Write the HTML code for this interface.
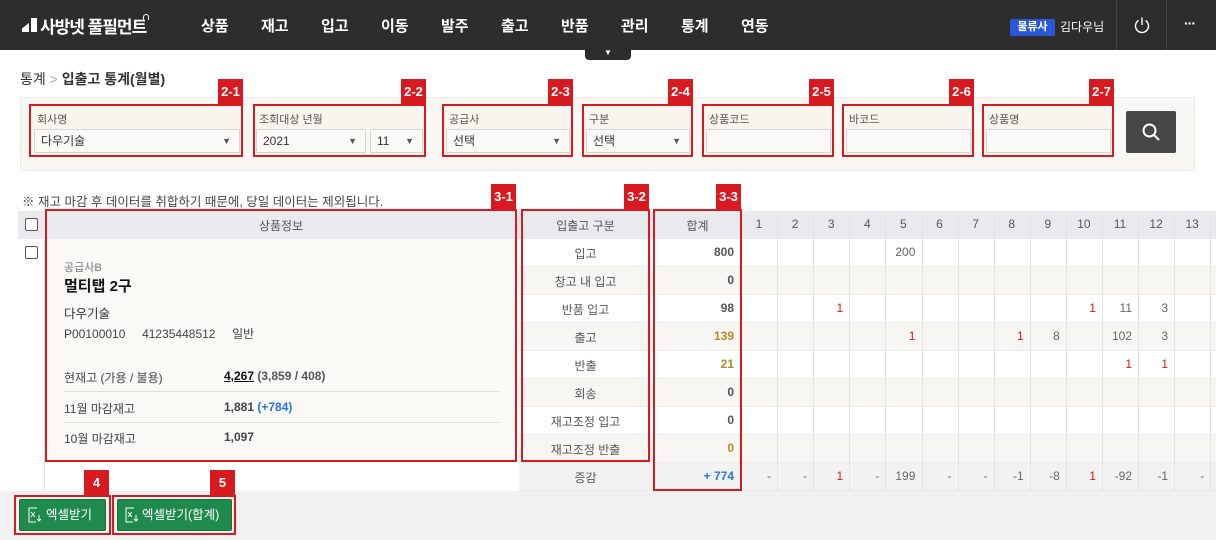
<!DOCTYPE html>
<html><head><meta charset="utf-8"><style>
*{box-sizing:border-box;margin:0;padding:0}
body{width:1216px;height:540px;overflow:hidden;background:#fff;font-family:"Liberation Sans","Noto Sans CJK KR",sans-serif;color:#333;position:relative}
.a{position:absolute}
.hdr{left:0;top:0;width:1216px;height:50px;background:#2d2d2d}
.nav{top:15px;color:#fff;font-size:15px;font-weight:bold}
.tag{background:#d71920;color:#fff;font-size:13px;font-weight:bold;width:25px;height:25px;text-align:center;line-height:26px}
.rb{border:2px solid #d71920}
.lbl{font-size:11px;color:#555}
.inp{height:24px;border:1px solid #d6d6d6;background:#fbfaf8;font-size:12px;color:#333;padding-left:6px;line-height:22px}
.inp i{position:absolute;right:8px;font-style:normal;font-size:9px;color:#555;top:0}
.cell{font-size:12px;text-align:center;color:#555}
.vl{width:1px;background:#e3e3e3}
</style></head><body>
<div class="a hdr"></div>
<div class="a" style="left:22px;top:18px;width:15px;height:14px">
<div class="a" style="left:0;top:5px;width:7px;height:9px;background:#fff;clip-path:polygon(100% 0,100% 100%,0 100%,0 60%)"></div>
<div class="a" style="left:9px;top:0;width:6px;height:14px;background:#fff"></div></div>
<div class="a" style="left:40px;top:13px;color:#fff;font-size:17px;font-weight:bold;letter-spacing:-1px">사방넷 풀필먼트</div>
<div class="a" style="left:143px;top:14px;width:6px;height:6px;border:1px solid #fff;border-bottom:none;border-radius:3px 3px 0 0"></div>
<div class="a nav" style="left:201px">상품</div>
<div class="a nav" style="left:261px">재고</div>
<div class="a nav" style="left:321px">입고</div>
<div class="a nav" style="left:381px">이동</div>
<div class="a nav" style="left:441px">발주</div>
<div class="a nav" style="left:501px">출고</div>
<div class="a nav" style="left:561px">반품</div>
<div class="a nav" style="left:621px">관리</div>
<div class="a nav" style="left:681px">통계</div>
<div class="a nav" style="left:741px">연동</div>
<div class="a" style="left:585px;top:50px;width:46px;height:10px;background:#2d2d2d;border-radius:0 0 4px 4px;color:#fff;font-size:8px;text-align:center;line-height:6px">▼</div>
<div class="a" style="left:1010px;top:19px;width:45px;height:17px;background:#2a56d8;border-radius:2px;color:#fff;font-size:11px;font-weight:bold;text-align:center;line-height:17px">물류사</div>
<div class="a" style="left:1060px;top:18px;color:#fff;font-size:12px">김다우님</div>
<div class="a" style="left:1116px;top:0;width:1px;height:50px;background:#444"></div>
<div class="a" style="left:1166px;top:0;width:1px;height:50px;background:#444"></div>
<svg class="a" style="left:1133px;top:16px" width="18" height="18" viewBox="0 0 18 18" fill="none" stroke="#fff" stroke-width="1.4"><path d="M5.5 4.5A6.5 6.5 0 1 0 12.5 4.5"/><path d="M9 1.5V9"/></svg>
<div class="a" style="left:1184px;top:15px;color:#fff;font-size:14px;font-weight:bold;letter-spacing:-1px">···</div>

<div class="a" style="left:20px;top:69px;font-size:14px;color:#333">통계 <span style="color:#aaa">&gt;</span> <b>입출고 통계(월별)</b></div>

<div class="a" style="left:20px;top:97px;width:1175px;height:74px;background:#f8f7f4;border:1px solid #ebebeb"></div>
<!-- filters -->
<div class="a rb" style="left:29px;top:104px;width:214px;height:53px;background:#f8f5ef"></div><div class="a tag" style="left:218px;top:79px">2-1</div>
<div class="a lbl" style="left:37px;top:111px">회사명</div>
<div class="a inp" style="left:34px;top:129px;width:206px">다우기술<i style="line-height:22px">▼</i></div>
<div class="a rb" style="left:253px;top:104px;width:173px;height:53px;background:#f8f5ef"></div><div class="a tag" style="left:401px;top:79px">2-2</div>
<div class="a lbl" style="left:259px;top:111px">조회대상 년월</div>
<div class="a inp" style="left:256px;top:129px;width:110px">2021<i style="line-height:22px">▼</i></div>
<div class="a inp" style="left:370px;top:129px;width:53px">11<i style="line-height:22px">▼</i></div>
<div class="a rb" style="left:442px;top:104px;width:131px;height:53px;background:#f8f5ef"></div><div class="a tag" style="left:548px;top:79px">2-3</div>
<div class="a lbl" style="left:449px;top:111px">공급사</div>
<div class="a inp" style="left:446px;top:129px;width:124px">선택<i style="line-height:22px">▼</i></div>
<div class="a rb" style="left:582px;top:104px;width:111px;height:53px;background:#f8f5ef"></div><div class="a tag" style="left:668px;top:79px">2-4</div>
<div class="a lbl" style="left:589px;top:111px">구분</div>
<div class="a inp" style="left:586px;top:129px;width:104px">선택<i style="line-height:22px">▼</i></div>
<div class="a rb" style="left:702px;top:104px;width:132px;height:53px;background:#f8f5ef"></div><div class="a tag" style="left:809px;top:79px">2-5</div>
<div class="a lbl" style="left:709px;top:111px">상품코드</div>
<div class="a inp" style="left:706px;top:129px;width:125px"></div>
<div class="a rb" style="left:842px;top:104px;width:132px;height:53px;background:#f8f5ef"></div><div class="a tag" style="left:949px;top:79px">2-6</div>
<div class="a lbl" style="left:849px;top:111px">바코드</div>
<div class="a inp" style="left:846px;top:129px;width:125px"></div>
<div class="a rb" style="left:982px;top:104px;width:132px;height:53px;background:#f8f5ef"></div><div class="a tag" style="left:1089px;top:79px">2-7</div>
<div class="a lbl" style="left:989px;top:111px">상품명</div>
<div class="a inp" style="left:986px;top:129px;width:125px"></div>
<div class="a" style="left:1126px;top:111px;width:50px;height:42px;background:#474747;border-radius:2px"></div>
<svg class="a" style="left:1141px;top:122px" width="20" height="20" viewBox="0 0 20 20" fill="none" stroke="#fff" stroke-width="2"><circle cx="8.5" cy="8.5" r="6"/><path d="M13 13l5 5"/></svg>

<div class="a" style="left:22px;top:191px;font-size:12.5px;color:#444">※ 재고 마감 후 데이터를 취합하기 때문에, 당일 데이터는 제외됩니다.</div>

<!-- table header -->
<div class="a" style="left:18px;top:211px;width:1198px;height:28px;background:#e9eaed"></div>
<div class="a" style="left:18px;top:239px;width:27px;height:252px;background:#fff;border-right:1px solid #e3e3e3"></div>
<div class="a" style="left:25px;top:218px;width:13px;height:13px;border:1px solid #555;border-radius:2px;background:#fff"></div>
<div class="a" style="left:25px;top:246px;width:13px;height:13px;border:1px solid #555;border-radius:2px;background:#fff"></div>
<div class="a" style="left:45px;top:239px;width:472px;height:222px;background:#faf9f6"></div>
<div class="a cell" style="left:45px;top:217px;width:472px">상품정보</div>
<div class="a" style="left:64px;top:259px;font-size:11px;color:#777">공급사B</div>
<div class="a" style="left:64px;top:275px;font-size:15px;font-weight:bold;color:#111">멀티탭 2구</div>
<div class="a" style="left:64px;top:303px;font-size:12.5px;color:#333">다우기술</div>
<div class="a" style="left:64px;top:325px;font-size:12px;color:#444">P00100010 &nbsp;&nbsp;&nbsp; 41235448512 &nbsp;&nbsp;&nbsp; 일반</div>
<div class="a" style="left:64px;top:369px;font-size:12px;color:#444">현재고 (가용 / 불용)</div>
<div class="a" style="left:224px;top:369px;font-size:12px;color:#333"><b style="text-decoration:underline;color:#111">4,267</b> <b style="color:#555">(3,859 / 408)</b></div>
<div class="a" style="left:64px;top:391px;width:435px;height:1px;background:#ddd"></div>
<div class="a" style="left:64px;top:400px;font-size:12px;color:#444">11월 마감재고</div>
<div class="a" style="left:224px;top:400px;font-size:12px;font-weight:bold;color:#444">1,881 <span style="color:#2a74d8">(+784)</span></div>
<div class="a" style="left:64px;top:422px;width:435px;height:1px;background:#ddd"></div>
<div class="a" style="left:64px;top:430px;font-size:12px;color:#444">10월 마감재고</div>
<div class="a" style="left:224px;top:430px;font-size:12px;font-weight:bold;color:#444">1,097</div>
<div class="a rb" style="left:45px;top:209px;width:472px;height:253px"></div><div class="a tag" style="left:491px;top:184px">3-1</div>

<!-- rows container -->
<div class="a" style="left:519px;top:239px;width:697px;height:252px" id="rows"></div>
<div class="a" style="left:519px;top:211px;width:1px;height:280px;background:#e3e3e3"></div>

<div id="tbl"></div>

<div class="a rb" style="left:521px;top:209px;width:129px;height:253px"></div><div class="a tag" style="left:624px;top:184px">3-2</div>
<div class="a rb" style="left:653px;top:209px;width:89px;height:282px"></div><div class="a tag" style="left:716px;top:184px">3-3</div>

<!-- bottom -->
<div class="a" style="left:0;top:491px;width:1216px;height:49px;background:#f1f1f1"></div>
<div class="a" style="left:0;top:491px;width:519px;height:0"></div>
<div class="a" style="left:19px;top:499px;width:87px;height:32px;background:#1e8a4c;border:1px solid #15703c;border-radius:2px;color:#fff;font-size:12.5px;line-height:30px;padding-left:26px">엑셀받기</div>
<div class="a" style="left:117px;top:499px;width:115px;height:32px;background:#1e8a4c;border:1px solid #15703c;border-radius:2px;color:#fff;font-size:12.5px;line-height:30px;padding-left:24px">엑셀받기(합계)</div>
<svg class="a" style="left:28px;top:507px" width="14" height="16" viewBox="0 0 14 16" fill="none" stroke="#fff" stroke-width="1"><path d="M9 1H1v14h7"/><path d="M3 5l4 5M7 5l-4 5"/><path d="M11 8v6M9 12l2 2 2-2"/></svg>
<svg class="a" style="left:125px;top:507px" width="14" height="16" viewBox="0 0 14 16" fill="none" stroke="#fff" stroke-width="1"><path d="M9 1H1v14h7"/><path d="M3 5l4 5M7 5l-4 5"/><path d="M11 8v6M9 12l2 2 2-2"/></svg>
<div class="a rb" style="left:14px;top:495px;width:97px;height:40px"></div><div class="a tag" style="left:84px;top:470px">4</div>
<div class="a rb" style="left:112px;top:495px;width:124px;height:40px"></div><div class="a tag" style="left:210px;top:470px">5</div>

<script>
var names=["입고","창고 내 입고","반품 입고","출고","반출","회송","재고조정 입고","재고조정 반출","증감"];
var tot=["800","0","98","139","21","0","0","0","+ 774"];
var totc=["#555","#555","#555","#b08a2a","#b08a2a","#555","#555","#b08a2a","#2a74d8"];
var R="#d71920",G="#666";
var d={0:{5:["200",G]},2:{3:["1",R],10:["1",R],11:["11",G],12:["3",G]},3:{5:["1",R],8:["1",R],9:["8",G],11:["102",G],12:["3",G]},4:{11:["1",R],12:["1",R]},
8:{1:["-",G],2:["-",G],3:["1",R],4:["-",G],5:["199",G],6:["-",G],7:["-",G],8:["-1",G],9:["-8",G],10:["1",R],11:["-92",G],12:["-1",G],13:["-",G]}};
var h="";var y0=211,rh=28;
h+='<div class="a cell" style="left:521px;top:217px;width:129px">입출고 구분</div>';
h+='<div class="a cell" style="left:653px;top:217px;width:89px">합계</div>';
for(var c=1;c<=13;c++){var x=741+(c-1)*36.1;h+='<div class="a vl" style="left:'+x+'px;top:211px;height:280px"></div><div class="a cell" style="left:'+x+'px;top:217px;width:36px">'+c+'</div>';}
h+='<div class="a vl" style="left:'+(741+13*36.1)+'px;top:211px;height:280px"></div>';
for(var r=0;r<9;r++){var y=239+r*28;var bg=r==8?"#f2f2f2":(r%2?"#f7f6f2":"#fff");
h='<div class="a" style="left:519px;top:'+y+'px;width:697px;height:28px;background:'+bg+';border-bottom:1px solid #ececec"></div>'+h;
h+='<div class="a cell" style="left:521px;top:'+(y+6)+'px;width:129px">'+names[r]+'</div>';
h+='<div class="a" style="left:653px;top:'+(y+6)+'px;width:81px;text-align:right;font-size:12px;font-weight:bold;color:'+totc[r]+'">'+tot[r]+'</div>';
var dr=d[r]||{};for(var k in dr){var x=741+(k-1)*36.1;h+='<div class="a" style="left:'+x+'px;top:'+(y+6)+'px;width:30px;text-align:right;font-size:12px;color:'+dr[k][1]+'">'+dr[k][0]+'</div>';}}
h='<div class="a" style="left:653px;top:239px;width:88px;height:252px;background:#faf8f2"></div>'+h;
document.getElementById("tbl").innerHTML=h;
</script>
</body></html>
